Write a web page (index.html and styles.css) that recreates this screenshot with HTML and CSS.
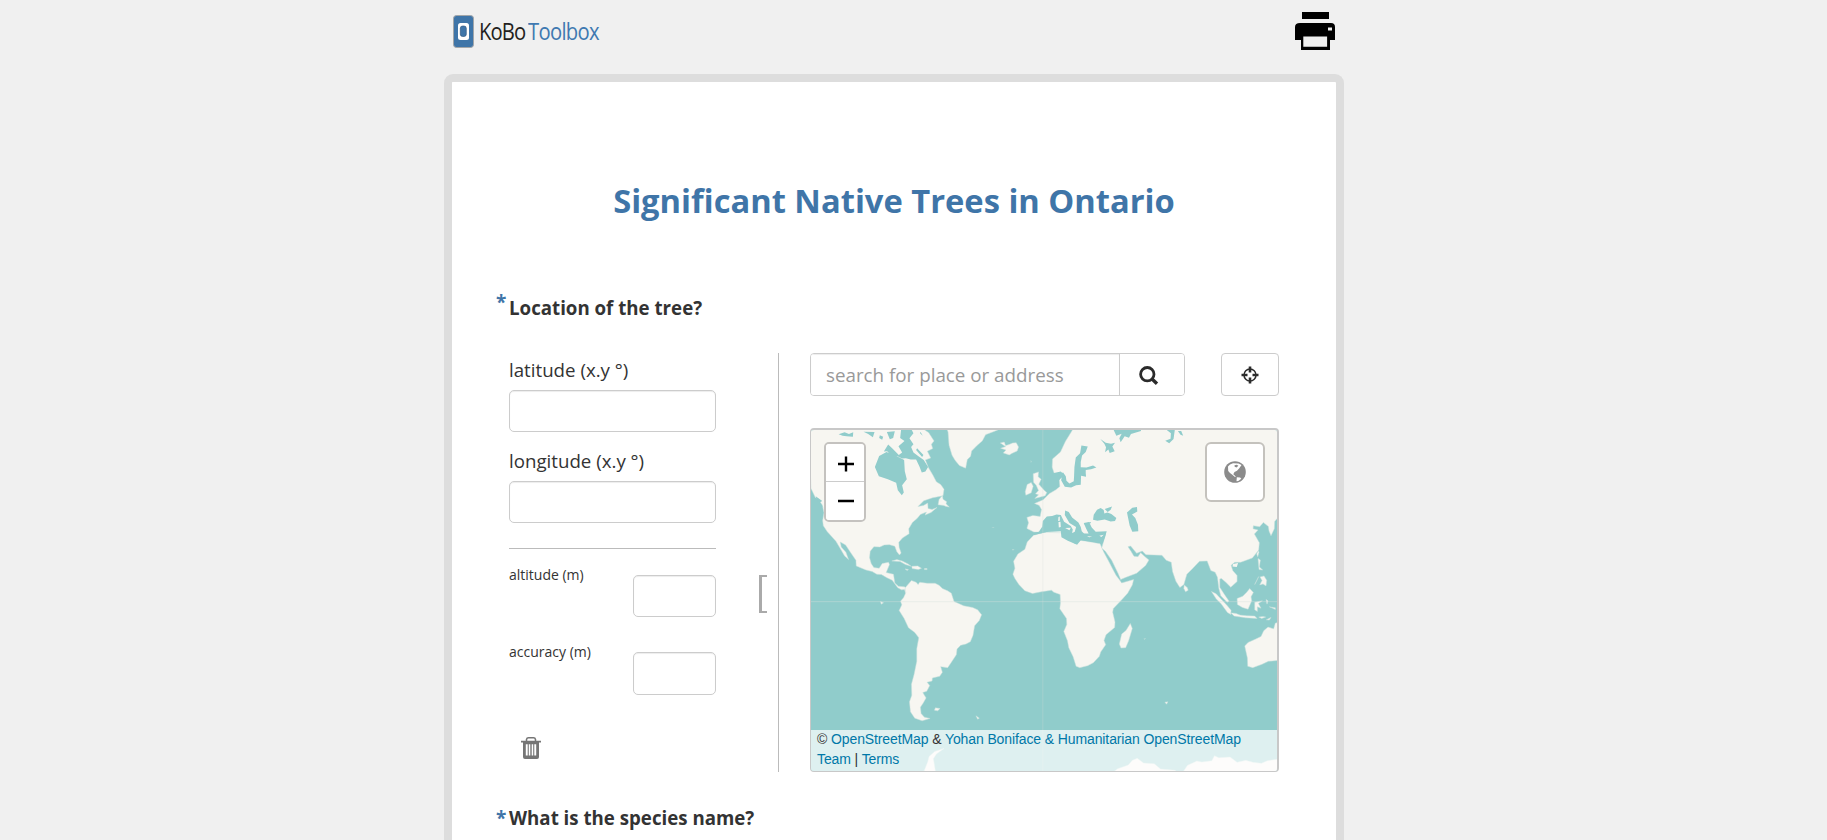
FILE: index.html
```html
<!DOCTYPE html>
<html lang="en">
<head>
<meta charset="utf-8">
<title>Significant Native Trees in Ontario</title>
<link rel="stylesheet" href="styles.css">
</head>
<body>
<div class="page">
  <header class="header">
    <div class="logo">
      <svg class="logo-mark" width="21" height="33" viewBox="0 0 21 33"><rect x=".5" y=".5" width="20" height="32" rx="3" fill="#3f75a8" stroke="#a3a6a8"/><rect x="5" y="8" width="11" height="17" rx="2.5" fill="#fff"/><rect x="7.3" y="11" width="6" height="10.5" rx="2.3" fill="#3f75a8" stroke="#294f78" stroke-width=".6"/></svg>
      <span class="logo-kobo">KoBo</span><span class="logo-toolbox">Toolbox</span>
    </div>
    <svg class="print" width="40" height="38" viewBox="0 0 40 38"><path d="M7 0h27v7H7zM5 11h31q4 0 4 4v13h-5v10H6V28H0V15q0-4 5-4z"/><path d="M8.3 24.5h23.8v10.3H8.3zM33 15.500h4v3h-4z" fill="#efefef"/></svg>
  </header>
  <main class="paper">
    <h1 class="title">Significant Native Trees in Ontario</h1>
    <section class="question">
      <h2 class="q-label"><span class="star star-high">*</span>Location of the tree?</h2>
      <div class="geo">
        <div class="coords">
          <label class="field"><span class="field-label">latitude (x.y °)</span><input class="box" type="text"></label>
          <label class="field"><span class="field-label">longitude (x.y °)</span><input class="box" type="text"></label>
          <div class="rule"></div>
          <div class="extra">
            <label class="small-field"><span class="small-label">altitude (m)</span><input class="box box-small" type="text"></label>
            <label class="small-field"><span class="small-label">accuracy (m)</span><input class="box box-small box-accuracy" type="text"></label>
          </div>
          <svg class="trash" width="20" height="22" viewBox="0 0 20 22"><path d="M0 3.700h20v1.800h-2V20q0 2-2 2H4q-2 0-2-2V5.500H0z" fill="#757575"/><path d="M5.500 4V2.500Q5.800.8 7.500.8h5q1.700 0 2 1.700V4" fill="none" stroke="#757575" stroke-width="1.500"/><path d="M4.800 7.200h1.900v11.300H4.800zM7.800 7.200h1.500v11.300H7.800zM10.700 7.200h1.500v11.300h-1.500zM13.300 7.200h1.900v11.300h-1.900z" fill="#fff"/></svg>
        </div>
        <div class="bracket"></div>
        <div class="map-side">
          <div class="tools">
            <div class="search">
              <input class="search-input" type="text" placeholder="search for place or address">
              <button class="search-btn"><svg width="20" height="20" viewBox="0 0 20 20" fill="none" stroke="#2b2b2b"><circle cx="8.300" cy="8.200" r="6.700" stroke-width="2.800"/><path d="M13 13l5 4.800" stroke-width="3.400"/></svg></button>
            </div>
            <button class="locate"><svg width="18" height="18" viewBox="0 0 18 18" fill="none" stroke="#2b2b2b"><circle cx="9" cy="9" r="6" stroke-width="1.500"/><path d="M9 .5v6M9 11.500v6M.5 9h6M11.500 9h6" stroke-width="2.600"/></svg></button>
          </div>
          <div class="map">
            <svg class="world" viewBox="18 12 1401 1026" preserveAspectRatio="none">
              <rect x="15" y="9" width="1410" height="1035" fill="#90cccb"/>
              <g fill="#f7f6f1" stroke="#c8e1dc" stroke-width="1.500" stroke-linejoin="round">
                <!-- North America -->
                <path d="M10 5H350L372 20 388 45 380 55 384 68 368 76 378 96 362 102 371 125 384 147 395 168 408 176 418 190 415 210 384 216 357 225 340 242 356 239 369 232 370 248 382 251 397 245 379 260 361 268 365 259 347 266 337 278 323 290 312 309 313 324 293 337 282 350 283 365 289 382 284 388 276 378 270 362 254 357 238 358 225 364 207 363 196 377 194 396 199 414 207 426 223 428 232 414 251 410 254 417 244 441 266 446 270 472 281 482 299 484 307 491 305 510 299 492 290 493 279 487 262 464 245 456 230 447 216 446 202 438 183 433 154 421 153 404 136 379 122 358 106 349 109 364 123 380 131 402 119 391 105 367 93 347 78 330 67 318 55 300 53 284 57 261 52 238 38 218 31 215 18 188Z"/>
                <!-- Newfoundland, Greenland, Iceland -->
                <path d="M400 237L403 221 413 209 415 220 426 228 424 234 434 244 424 242 417 239ZM425 5L430 18 433 58 442 88 451 103 464 119 483 127 488 101 498 91 501 75 518 58 533 45 543 26 580 12V5ZM587 51L599 48 603 59 613 56 624 51 635 50 642 63 638 75 623 82 614 87 596 81 604 72 588 67 603 62Z"/>
                <!-- Caribbean -->
                <path d="M261 406L276 402 292 406 310 415 319 422 302 417 286 408ZM321 422L339 421 350 428 341 432 322 429ZM301 430l10 2-4 3zM359 429h8v3h-8z"/>
                <!-- South America -->
                <path d="M301 487L320 465 334 470 340 477 345 470 367 473 391 473 403 479 413 489 429 496 440 503 448 528 462 534 477 541 504 546 519 553 531 568 524 585 510 601 505 630 497 649 484 656 468 660 457 671 455 688 440 711 429 727 408 724 413 741 405 753 383 758 382 767 367 771 375 781 366 798 354 802 364 818 355 834 347 846 349 865 359 876 376 880 352 887 330 879 317 860 314 830 321 810 320 777 328 747 336 708 336 670 342 637 330 621 311 607 298 579 283 555 291 538 287 527 296 517 303 502Z"/>
                <path d="M392 848l14 2-7 7-10-2zM514 872l10 7-5 3zM227 528l9 4-7 4z"/>
                <!-- Africa and Madagascar -->
                <path d="M687 329L704 324 726 319 770 316 774 333 792 340 812 354 829 344 864 350 887 354 898 379 913 407 925 430 935 449 947 465 952 472 988 462 984 478 970 503 953 522 927 549 925 560 932 590 931 606 905 628 899 645 904 658 889 680 885 693 867 712 850 721 826 727 815 723 811 710 806 694 793 667 789 646 778 618 787 597 786 579 766 550 768 532 767 507 748 500 741 494 710 499 684 504 661 496 643 477 631 459 625 446 631 428 627 407 640 385 661 371 668 349ZM978 594L984 609 973 646 964 667 950 668 945 656 952 626 965 615Z"/>
                <!-- British Isles -->
                <path d="M668 176L680 170 686 181 680 201 664 208 662 198ZM686 144L702 138 701 153 710 160 703 175 719 193 727 200 722 210 691 218 702 207 693 204 702 194 695 178 687 169Z"/>
                <!-- Eurasia -->
                <path d="M667 275L685 269 707 272 711 251 704 239 690 233 716 222 735 203 754 192 766 182 764 163 766 144 750 145 743 124 744 99 768 78 783 46 799 20 808 5H1425V272L1412 287 1411 309 1401 330 1395 316 1393 302 1378 290 1367 303 1348 300 1347 309 1362 313 1351 325 1366 351 1364 373 1345 397 1310 410 1292 410 1281 419 1286 435 1299 450 1299 468 1280 485 1265 470 1252 459 1247 460 1247 485 1261 507 1275 527 1269 530 1250 511 1244 488 1240 455 1233 440 1220 435 1209 406 1186 407 1164 430 1148 446 1139 477 1127 486 1115 467 1105 438 1101 410 1086 404 1073 389 1025 387 1014 376 997 383 979 361 971 363 980 377 989 392 1001 393 1009 381 1023 394 1034 403 1024 420 997 443 963 456 949 462 941 443 922 404 903 377 892 367 904 325 688 319 667 308 672 291Z"/>
                <path d="M1140 478l9 8 3 8-8 5-5-10z"/>
                <!-- Southeast Asia -->
                <path d="M1222 498L1236 505 1252 522 1269 540 1281 554 1280 567 1270 561 1251 535 1236 520ZM1280 562L1296 564 1308 569 1328 571 1352 572 1359 579 1325 577 1290 572ZM1299 519L1316 512 1328 500 1337 489 1348 501 1341 514 1343 526 1332 551 1315 546 1300 537ZM1352 530L1375 526 1363 534 1371 548 1360 544 1360 558 1352 553ZM1362 399L1369 403 1366 424 1376 433 1365 432ZM1368 454L1380 451 1388 464 1386 481 1377 475 1367 478 1374 465ZM1352 477l12-24-8 16zM1364 575l13-2 8 2-12 4zM1387 583l14-7-5 8zM1362 376l3 3-4 14-3-8zM1386 522l6 4-3 10zM1396 544l18 3v5z"/>
                <path d="M1425 591L1414 593 1409 610 1392 605 1379 616 1371 633 1355 641 1332 651 1322 662 1330 698 1331 723 1346 727 1374 717 1393 708 1425 705Z"/>
                <path d="M330 1044L358 1038 369 1010 373 994 390 979 418 970 395 987 386 1001 393 1044ZM915 1050L940 1031 972 1020 984 1006 999 1000 1018 1014 1050 1016 1069 1032 1114 1036 1110 1050ZM1130 1050L1150 1021 1178 1008 1193 1011 1223 1007 1231 992 1244 998 1278 996 1299 1012 1325 1006 1347 1012 1372 1015 1390 1007 1425 1002V1050Z"/>
                <path d="M1082 831l9-1-4 7z"/>
              </g>
              <path d="M1018 639l8-1-6 6zM560 305l10-1-4 3zM678 103l4 3-3 5zM622 370l8 1-5 4z" fill="#b5dbd7"/>
              <g fill="#90cccb">
                <!-- Hudson Bay and Arctic channels -->
                <path d="M247 76L261 90 278 91 292 98 303 97 318 101 334 101 344 122 351 140 362 137 370 123 357 102 340 90 326 80 319 63 326 55 314 37 326 22 320 10H289L286 36 299 45 281 61 292 80 282 87 262 67 250 56 237 77ZM245 78L223 90 210 123 222 151 249 160 274 171 279 193 291 208 297 200 292 178 306 160 300 136 298 102 282 94Z"/>
                <path d="M101 25L119 19 132 24 145 19 144 32 125 31 113 29ZM176 17L209 18 204 34 190 24ZM225 28l10 4-3 9-9-5zM246 18l24-2-5 20-10 4zM337 67l19 20-4 6-18-21zM347 17l7 12-8-7z"/>
                <path d="M32 211l20 15-8 4 12 17-18-19z"/>
                <!-- Mediterranean -->
                <path d="M687 322L703 318 713 303 715 286 727 272 743 271 756 266 769 268 779 288 799 301 805 311 803 323 811 318 815 304 795 292 781 268 782 254 793 259 803 275 822 290 829 304 832 317 842 327 853 324 845 308 838 292 854 289 862 305 874 318 907 317 902 334 895 353 865 349 829 344 818 357 790 345 771 335 769 317 727 319 688 328Z"/>
                <path d="M866 282L868 267 878 252 889 247 898 253 900 263 909 260 921 265 936 277 932 286 919 287 901 281 879 285ZM901 250l22-8-4 10-9 7zM839 294l19-5 2 3-18 6zM968 260L984 246 998 244 999 257 983 266 993 277 1001 297 1002 317 984 318 976 299Z"/>
                <!-- Baltic and northern seas -->
                <path d="M831 59L850 62 844 78 833 89 829 108 829 124 846 125 866 119 876 125 860 130 844 132 844 142 845 153 830 150 829 177 815 178 800 185 781 183 770 163 775 138 784 151 786 165 795 173 808 166 809 149 810 123 814 95 827 82ZM745 142L769 137 780 148 772 154 764 163 764 183 754 188 735 178Z"/>
                <path d="M888 39L904 50 920 53 932 50 924 62 931 76 916 81 912 71 902 79 905 64 900 53ZM927 10H1010V15L980 24 974 35 961 31 949 49 945 37 952 23 936 29ZM1085 10H1112L1108 39 1095 52 1083 44 1099 38 1100 22ZM1121 15l8 11 8 3-6-14z"/>
              </g>
              <path d="M1287 415l15-3-4 12-13-1z" fill="#f7f6f1"/>
              <!-- Mediterranean islands -->
              <path d="M762 274l4-2v13l-5 1zM762 289l6-1 1 16-6 1zM782 307l17-1-4 8zM848 331l15 2-9 2zM885 330l13-3-7 7z" fill="#f7f6f1"/>
              <path d="M15 528.500H1425" stroke="#d9e3df" stroke-opacity=".4" stroke-width="3"/>
              <path d="M715 9V1044" stroke="#d9e3df" stroke-opacity=".28" stroke-width="3"/>
            </svg>
            <div class="zoom"><button class="zoom-btn zoom-in"><svg width="16" height="16" viewBox="0 0 16 16"><path d="M8 .5v15M0 8h16" stroke="#000" stroke-width="2.400"/></svg></button><button class="zoom-btn"><svg width="16" height="16" viewBox="0 0 16 16"><path d="M0 8h16" stroke="#000" stroke-width="2.400"/></svg></button></div>
            <div class="layers"><svg width="22" height="22" viewBox="0 0 22 22"><circle cx="11" cy="11" r="10.800" fill="#8b8b8b"/><path d="M4 5.500L6 3.500 9 2.200l5.500.2L17.500 4l-2.200 3.200-2.300 2.600-2.500 1.100-1.200 2.300 2.500 2.200-.8.700-3-2.600-2-1.500L4.200 10z" fill="#fff"/><path d="M10.500 4.300l2.200-.6 1.700 1-1.900 1.700-1.800-.6z" fill="#8b8b8b"/><path d="M12.800 16.200l3.400.2 1.100 1.400-3 2.200-1.800.2z" fill="#fff"/></svg></div>
            <div class="attribution">© <a>OpenStreetMap</a> &amp; <a>Yohan Boniface &amp; Humanitarian OpenStreetMap</a><br><a>Team</a> | <a>Terms</a></div>
          </div>
        </div>
      </div>
    </section>
    <section class="question next">
      <h2 class="q-label"><span class="star">*</span>What is the species name?</h2>
    </section>
  </main>
</div>
</body>
</html>
```
FILE: styles.css
```css
* { box-sizing: border-box; }
html { height: 100%; overflow: hidden; }
body { margin: 0; height: 840px; overflow: hidden; background: #f0f0f0; color: #333; font-family: "Open Sans", "Noto Sans", sans-serif; }
button { padding: 0; background: #fff; border: 0; display: flex; align-items: center; justify-content: center; }
h1, h2 { margin: 0; }
.page { width: 900px; height: 840px; margin-left: 444px; overflow: hidden; }
.header { height: 74px; padding: 12px 8px 0 9px; display: flex; justify-content: space-between; align-items: flex-start; }
.logo { height: 38px; display: flex; align-items: flex-start; padding-top: 3px; font-size: 23px; line-height: 33px; }
.logo-mark { margin-right: 5px; }
.logo-kobo, .logo-toolbox { transform: scaleX(.88); transform-origin: left; letter-spacing: -1px; }
.logo-kobo { color: #231f20; width: 49px; }
.logo-toolbox { color: #3f79b1; letter-spacing: -.8px; }
.print { display: block; margin-right: 1px; }
.paper { height: 766px; border: 8px solid #ddd; border-bottom: 0; border-radius: 9px 9px 0 0; background: #fff; padding: 94px 57px 0 57px; overflow: hidden; }
.title { height: 50px; text-align: center; font-size: 32.7px; line-height: 50px; font-weight: 700; color: #3f75a8; white-space: nowrap; }
.question { padding-top: 69px; }
.next { padding-top: 33px; }
.q-label { position: relative; font-size: 18.7px; line-height: 26px; font-weight: 700; }
.star { position: absolute; left: -13px; top: 0; color: #3f75a8; font-size: 19px; }
.star-high { top: -6px; }
.geo { display: flex; height: 419px; margin-top: 32px; }
.coords { width: 207px; flex: none; }
.field { display: flex; flex-direction: column; height: 91px; }
.field-label { font-size: 18.7px; line-height: 34px; height: 37px; }
.box { width: 100%; height: 42px; padding: 6px 15px; border: 1px solid #ccc; border-radius: 5px; box-shadow: inset 0 1px 1px rgba(0,0,0,.075); }
.rule { margin-top: 13px; border-top: 1px solid #bbb; }
.extra { padding-top: 15px; }
.small-field { display: flex; justify-content: space-between; height: 77px; padding-top: 11px; }
.small-label { font-size: 14px; line-height: 22px; margin-top: -11px; }
.box-small { width: 83px; }
.box-accuracy { height: 43px; }
.trash { display: block; margin: 19px 0 0 12px; }
.bracket { width: 9px; height: 38px; margin: 222px 0 0 43px; border: 2px solid #aaa; border-left-width: 3px; border-right: 0; }
.map-side { width: 501px; height: 419px; margin-left: 11px; padding-left: 31px; border-left: 1px solid #bbb; flex: none; }
.tools { display: flex; justify-content: space-between; height: 43px; }
.search { display: flex; width: 375px; border: 1px solid #ccc; border-radius: 4px; overflow: hidden; }
.search-input { width: 309px; border: 0; border-right: 1px solid #ccc; padding: 0 0 0 15px; font: 18.8px "Open Sans", sans-serif; box-shadow: inset 0 1px 1px rgba(0,0,0,.075); }
.search-input::placeholder { color: #999; }
.search-btn { flex: 1; padding-right: 7px; padding-top: 2px; }
.locate { width: 58px; border: 1px solid #ccc; border-radius: 4px; }
.map { position: relative; width: 469px; height: 344px; margin-top: 32px; border: 1px solid #c8c8c8; border-top-width: 2px; border-right-width: 2px; border-radius: 4px; overflow: hidden; }
.world { display: block; width: 100%; height: 100%; }
.zoom { position: absolute; left: 13px; top: 12px; width: 42px; height: 80px; border: 2px solid #c4c2bf; border-radius: 5px; overflow: hidden; }
.zoom-btn { width: 38px; height: 38px; padding-left: 1px; }
.zoom-in { border-bottom: 1px solid #ccc; padding-top: 3px; }
.layers { position: absolute; right: 12px; top: 12px; width: 60px; height: 60px; border: 2px solid #c4c2bd; border-radius: 6px; background: #fff; display: flex; align-items: center; justify-content: center; }
.attribution { position: absolute; left: 0; right: 0; bottom: 0; height: 41px; padding: 0 6px; background: rgba(255,255,255,.7); font: 14px/19.6px "Liberation Sans", Arial, sans-serif; letter-spacing: -.11px; color: #333; white-space: nowrap; }
.attribution a { color: #0078a8; }
```
